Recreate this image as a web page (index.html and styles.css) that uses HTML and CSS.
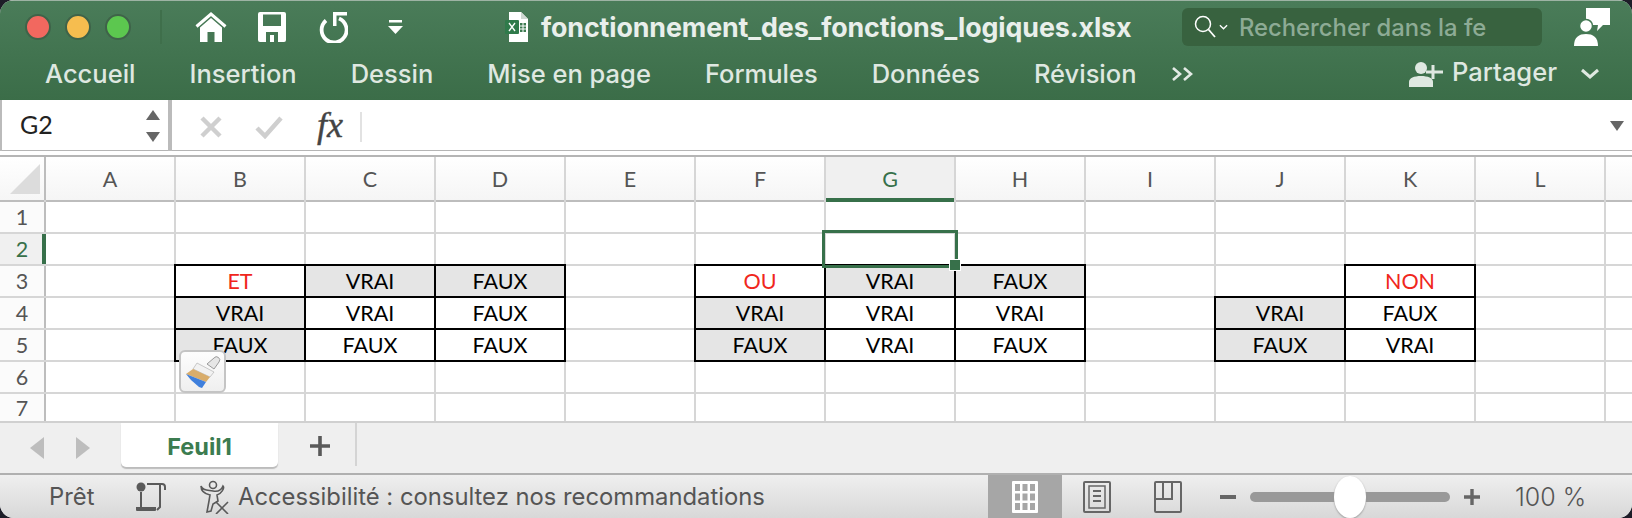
FILE: index.html
```html
<!DOCTYPE html>
<html lang="fr">
<head>
<meta charset="utf-8">
<title>fonctionnement_des_fonctions_logiques.xlsx</title>
<link rel="stylesheet" href="styles.css">
</head>
<body>
<div class="window">
  <header class="ribbon">
    <div class="titlebar">
      <div class="lights"><span class="light red"></span><span class="light yellow"></span><span class="light green"></span></div>
      <span class="qa-sep"></span>
      <svg class="ic-home" viewBox="0 0 32 30"><path d="M1.5 14.5 16 2l14.5 12.5" fill="none" stroke="#fff" stroke-width="3"/><path d="M5 15.5 16 6l11 9.500V30h-7.500V20h-7v10H5z" fill="#fff"/></svg>
      <svg class="ic-save" viewBox="0 0 28 30"><path d="M2 0h24a2 2 0 0 1 2 2v26a2 2 0 0 1-2 2H2a2 2 0 0 1-2-2V2a2 2 0 0 1 2-2zM5 2.500V14h18V2.500zM8 30h12V20H8zM12 23h4v7h-4z" fill="#fff" fill-rule="evenodd"/></svg>
      <svg class="ic-undo" viewBox="0 0 30 32"><path d="M8 9.500A12.500 12.500 0 1 0 21 7.500" fill="none" stroke="#fff" stroke-width="3.800"/><path d="M15 1h14v3.400H18.500V15H15z" fill="#fff"/></svg>
      <svg class="ic-drop" viewBox="0 0 15 14"><path d="M1 0h13v2.500H1zM0 6h15l-7.500 8z" fill="#fff"/></svg>
      <svg class="ic-file" viewBox="0 0 24 30"><path d="M4 0h12l7 7v23H4z" fill="#fff"/><path d="M16 0v7h7z" fill="#cfd8d2"/><rect x="0" y="8" width="14" height="14" rx="1" fill="#2f7a4a"/><path d="M4 11l6 8M10 11l-6 8" stroke="#fff" stroke-width="1.300"/><path d="M15 11h6v9h-6z" fill="#3d7a50"/><path d="M15 14h6M15 17h6M18 11v9" stroke="#fff"/></svg>
      <h1 class="doc-title">fonctionnement_des_fonctions_logiques.xlsx</h1>
      <div class="search">
        <svg class="ic-mag" viewBox="0 0 22 24"><circle cx="9" cy="9" r="7.500" fill="none" stroke="#fff" stroke-width="1.500"/><path d="M14.500 14.500 21 22" stroke="#fff" stroke-width="1.800"/></svg>
        <svg class="ic-mini" viewBox="0 0 10 6"><path d="M1 1l4 4 4-4" fill="none" stroke="#fff" stroke-width="1.500"/></svg>
        <span class="search-text">Rechercher dans la fe</span>
      </div>
      <svg class="ic-user" viewBox="0 0 36 38"><path d="M12 0h24v17h-7l-6 6 1-6h-12z" fill="#fff"/><circle cx="12" cy="18" r="6.500" fill="#fff" stroke="#457a55" stroke-width="1.500"/><path d="M0 38c0-9 5-12 12-12s12 3 12 12z" fill="#fff"/></svg>
    </div>
    <nav class="tabs">
      <span>Accueil</span><span>Insertion</span><span>Dessin</span><span>Mise en page</span><span>Formules</span><span>Données</span><span>Révision</span>
      <svg class="ic-more" viewBox="0 0 24 16"><path d="M2 2l7 6-7 6M13 2l7 6-7 6" fill="none" stroke="#e3ebe5" stroke-width="2.600"/></svg>
      <div class="share">
        <svg class="ic-share" viewBox="0 0 34 26"><circle cx="12" cy="7" r="6" fill="#dfe8e1"/><path d="M0 26v-5c0-4 5-6 12-6s12 2 12 6v5z" fill="#dfe8e1"/><path d="M24 4v14M17 11h17" stroke="#dfe8e1" stroke-width="3"/></svg>
        <span>Partager</span>
      </div>
      <svg class="ic-chev" viewBox="0 0 20 11"><path d="M2 2l8 7 8-7" fill="none" stroke="#dfe8e1" stroke-width="3"/></svg>
    </nav>
  </header>

  <div class="formula">
    <div class="namebox">
      <span>G2</span>
      <div class="stepper"><i class="tri up"></i><i class="tri down"></i></div>
    </div>
    <svg class="ic-x" viewBox="0 0 24 24"><path d="M3 3l18 18M21 3 3 21" stroke="#cfcfcf" stroke-width="4.500"/></svg>
    <svg class="ic-ok" viewBox="0 0 28 24"><path d="M2 13l8 8L26 3" fill="none" stroke="#cfcfcf" stroke-width="4.500"/></svg>
    <span class="fx">fx</span>
    <span class="fx-sep"></span>
    <i class="tri down fx-arrow"></i>
  </div>

  <main class="sheet">
    <div class="corner"><svg viewBox="0 0 30 30"><path d="M30 0v30H0z" fill="#dcdcdc"/></svg></div>
    <div class="ch">A</div><div class="ch">B</div><div class="ch">C</div><div class="ch">D</div><div class="ch">E</div><div class="ch">F</div><div class="ch on">G</div><div class="ch">H</div><div class="ch">I</div><div class="ch">J</div><div class="ch">K</div><div class="ch">L</div><div class="ch"></div>

    <div class="rh">1</div><div></div><div></div><div></div><div></div><div></div><div></div><div></div><div></div><div></div><div></div><div></div><div></div><div></div>

    <div class="rh on">2</div><div></div><div></div><div></div><div></div><div></div><div></div><div class="sel"><i class="handle"></i></div><div></div><div></div><div></div><div></div><div></div><div></div>

    <div class="rh">3</div><div></div><div class="t red-text">ET</div><div class="t g">VRAI</div><div class="t g">FAUX</div><div></div><div class="t red-text">OU</div><div class="t g">VRAI</div><div class="t g">FAUX</div><div></div><div></div><div class="t red-text">NON</div><div></div><div></div>

    <div class="rh">4</div><div></div><div class="t g">VRAI</div><div class="t">VRAI</div><div class="t">FAUX</div><div></div><div class="t g">VRAI</div><div class="t">VRAI</div><div class="t">VRAI</div><div></div><div class="t g">VRAI</div><div class="t">FAUX</div><div></div><div></div>

    <div class="rh">5</div><div></div><div class="t g">FAUX</div><div class="t">FAUX</div><div class="t">FAUX</div><div></div><div class="t g">FAUX</div><div class="t">VRAI</div><div class="t">FAUX</div><div></div><div class="t g">FAUX</div><div class="t">VRAI</div><div></div><div></div>

    <div class="rh">6</div><div></div><div></div><div></div><div></div><div></div><div></div><div></div><div></div><div></div><div></div><div></div><div></div><div></div>

    <div class="rh">7</div><div></div><div></div><div></div><div></div><div></div><div></div><div></div><div></div><div></div><div></div><div></div><div></div><div></div>

    <button class="paint" aria-label="Options de mise en forme">
      <svg viewBox="0 0 36 34"><path d="M22 9 29 3a3 3 0 0 1 5 4l-5 7z" fill="#e6e6e6" stroke="#9a9a9a"/><path d="M12 8 29 17l-4 5L8 14z" fill="#f2f2f2" stroke="#aaa" stroke-width=".6"/><path d="M8 14 25 22l-4 5L1 19z" fill="#d9ad6b"/><path d="M1 19 21 27l-4 6-3-1-8-7z" fill="#3f7fdc"/></svg>
    </button>
  </main>

  <div class="sheetbar">
    <svg class="nav-arrow" viewBox="0 0 14 22"><path d="M14 0v22L0 11z" fill="#bdbdbd"/></svg>
    <svg class="nav-arrow next" viewBox="0 0 14 22"><path d="M0 0v22l14-11z" fill="#bdbdbd"/></svg>
    <div class="sheet-tab">Feuil1</div>
    <svg class="ic-add" viewBox="0 0 20 20"><path d="M10 0v20M0 10h20" stroke="#595959" stroke-width="3.600"/></svg>
    <span class="tab-sep"></span>
  </div>

  <footer class="status">
    <span class="ready">Prêt</span>
    <svg class="ic-macro" viewBox="0 0 30 30"><circle cx="5" cy="5" r="4.500" fill="#5a5a5a"/><path d="M11 2h15a3 3 0 0 1 3 3v3M24 3v22l-3 3M5 10v15" fill="none" stroke="#5a5a5a" stroke-width="2"/><path d="M0 25h20v3a1 1 0 0 1-1 1H1a1 1 0 0 1-1-1z" fill="#5a5a5a"/></svg>
    <svg class="ic-a11y" viewBox="0 0 30 34"><circle cx="13" cy="5" r="3.500" fill="none" stroke="#5a5a5a" stroke-width="1.600"/><path d="M1 6c2 5 7 4 12 5s8 0 10-5c2 2-2 8-6 9l1 6-5 3-2 7-4 1 2-11 1-6C5 14 1 11 1 6z" fill="none" stroke="#5a5a5a" stroke-width="1.600"/><path d="M16 22l12 12M28 22 16 34" stroke="#5a5a5a" stroke-width="1.600"/></svg>
    <span class="a11y">Accessibilité : consultez nos recommandations</span>
    <div class="view-on">
      <svg class="ic-grid" viewBox="0 0 26 32"><rect width="26" height="32" rx="1" fill="#fff"/><path d="M3 3h5v7H3zM10.500 3h5v7h-5zM18 3h5v7h-5zM3 12.500h5v7H3zM10.500 12.500h5v7h-5zM18 12.500h5v7h-5zM3 22h5v7H3zM10.500 22h5v7h-5zM18 22h5v7h-5z" fill="#a6a6a6"/></svg>
    </div>
    <svg class="ic-page" viewBox="0 0 28 32"><rect x="1" y="1" width="26" height="30" rx="1" fill="none" stroke="#666" stroke-width="2"/><rect x="6" y="5" width="16" height="22" fill="none" stroke="#666" stroke-width="1.500"/><path d="M10 10h8M10 15h8M10 20h8" stroke="#666" stroke-width="2"/></svg>
    <svg class="ic-break" viewBox="0 0 28 32"><rect x="1" y="1" width="26" height="30" rx="1" fill="none" stroke="#666" stroke-width="2"/><path d="M1 18h17V1M9 1v17" fill="none" stroke="#666" stroke-width="2"/></svg>
    <span class="zoom-minus"></span>
    <div class="slider"><span class="thumb"></span></div>
    <svg class="ic-plus" viewBox="0 0 16 16"><path d="M8 0v16M0 8h16" stroke="#666" stroke-width="3.400"/></svg>
    <span class="pct">100 %</span>
  </footer>
</div>
</body>
</html>
```

FILE: styles.css
```css
* { box-sizing: border-box; }
html, body { margin: 0; height: 100%; }
body { background: #1d1d28; overflow: hidden; font-family: Inter, Roboto, "Liberation Sans", sans-serif; }

.window {
  width: 1632px; height: 518px;
  display: flex; flex-direction: column;
  border-radius: 14px; overflow: hidden;
  background: #efefef;
}

/* ribbon */
.ribbon {
  height: 100px; flex: none;
  background: linear-gradient(#4a7c59, #3b6d48);
  border-top: 1px solid #9db3a4;
  display: flex; flex-direction: column;
}
.titlebar { height: 52px; display: flex; align-items: center; padding-left: 25px; }
.lights { display: flex; gap: 14px; }
.light { width: 26px; height: 26px; border-radius: 50%; border: 2px solid #3f6349; }
.light.red { background: #f2685f; }
.light.yellow { background: #f6bd4f; }
.light.green { background: #5cc74f; }
.qa-sep { width: 2px; height: 34px; background: #3f6f4b; margin-left: 29px; }
.ic-home { width: 32px; height: 30px; margin-left: 33px; }
.ic-save { width: 28px; height: 30px; margin-left: 31px; }
.ic-undo { width: 30px; height: 32px; margin-left: 32px; }
.ic-drop { width: 15px; height: 14px; margin-left: 40px; }
.ic-file { width: 24px; height: 30px; margin-left: 102px; }
.doc-title {
  margin: 0 0 0 12px; width: 620px; white-space: nowrap;
  font-family: Inter, sans-serif; font-size: 26.800px; font-weight: 700; color: #e9efeb; letter-spacing: -0.1px;
}
.search {
  margin-left: 21px; width: 360px; height: 38px;
  background: #38623f; border-radius: 6px;
  display: flex; align-items: center; padding-left: 12px;
}
.ic-mag { width: 22px; height: 24px; flex: none; }
.ic-mini { width: 9px; height: 6px; flex: none; margin-left: 3px; }
.search-text {
  margin-left: 11px; white-space: nowrap;
  font-family: Inter, sans-serif; font-size: 23.800px; font-weight: 500; color: #8dab95;
}
.ic-user { width: 36px; height: 38px; margin-left: 32px; }

.tabs {
  height: 47px; display: flex; align-items: center; gap: 54px; padding: 0 32px 6px 45px;
  font-family: Inter, sans-serif; font-size: 25.500px; font-weight: 500; color: #dfe8e1;
}
.ic-more { width: 24px; height: 16px; margin-left: -20px; }
.share { margin-left: auto; display: flex; align-items: center; gap: 9px; }
.share span { position: relative; top: -2px; }
.ic-share { width: 34px; height: 26px; }
.ic-chev { width: 20px; height: 11px; margin-left: -31px; }

/* formula bar */
.formula {
  height: 57px; flex: none; background: #fff;
  display: flex; align-items: flex-start;
  border-bottom: 2px solid #b5b5b5;
  box-shadow: inset 0 -4px 0 #fff, inset 0 -5px 0 #b5b5b5;
}
.namebox {
  width: 172px; height: 51px; flex: none; padding: 0 8px 0 18px;
  border-left: 2px solid #bbb; border-right: 4px solid #bbb;
  display: flex; align-items: center; justify-content: space-between;
  font-family: Lato, sans-serif; font-size: 25px; color: #222;
}
.namebox > span { margin-bottom: 3px; }
.stepper { display: flex; flex-direction: column; gap: 12px; }
.tri { display: block; width: 0; height: 0; border-left: 7px solid transparent; border-right: 7px solid transparent; }
.tri.up { border-bottom: 10px solid #666; }
.tri.down { border-top: 10px solid #666; }
.ic-x { width: 24px; height: 24px; margin: 15px 0 0 27px; }
.ic-ok { width: 28px; height: 24px; margin: 15px 0 0 32px; }
.fx {
  margin: 4px 0 0 34px; width: 33px;
  font-family: "Liberation Serif", serif; font-style: italic; font-size: 36px; color: #444;
  -webkit-text-stroke: 0.4px #444;
}
.fx-sep { width: 2px; height: 30px; background: #e2e2e2; margin: 12px 0 0 10px; }
.fx-arrow { margin: 21px 8px 0 auto; }

/* sheet grid: the 2px gaps show through as the cell lines */
.sheet {
  position: relative; flex: none; height: 266px;
  display: grid;
  grid-template-columns: 44px repeat(12, 128px) 26px;
  grid-template-rows: 43px repeat(6, 30px) 27px;
  gap: 2px;
  background: #d6d6d6;
  border-bottom: 2px solid #d0d0d0;
  font-family: Lato, sans-serif; font-size: 21.500px; color: #000;
}
.sheet > div { background: #fff; display: flex; align-items: center; justify-content: center; }
.sheet > .corner { background: linear-gradient(#fff, #f6f6f6); justify-content: flex-start; box-shadow: 2px 0 0 #bdbdbd, 0 2px 0 #bdbdbd; }
.corner svg { width: 30px; height: 30px; margin-left: 10px; }
.sheet > .ch {
  background: linear-gradient(#fff, #f5f5f5); color: #555;
  box-shadow: 0 2px 0 #bdbdbd;
}
.sheet > .ch.on { background: #f0f0f0; color: #37704a; box-shadow: 0 2px 0 #37704a, inset 0 -2px 0 #37704a; }
.sheet > .rh { background: #fbfbfb; color: #555; box-shadow: 2px 0 0 #bdbdbd; }
.sheet > .rh.on { background: #f0f0f0; color: #37704a; box-shadow: 2px 0 0 #37704a, inset -2px 0 0 #37704a; }
.sheet > .t { outline: 2px solid #000; }
.sheet > .g { background: #e5e5e5; }
.sheet > .red-text { color: #f0261c; }
.sheet > .sel { position: relative; z-index: 1; outline: 3px solid #37704a; outline-offset: 1px; }
.handle {
  position: absolute; right: -6px; bottom: -6px; width: 10px; height: 10px;
  background: #37704a; outline: 1px solid #fff;
}
.paint {
  position: absolute; left: 179px; top: 193px; width: 47px; height: 43px; padding: 0;
  background: linear-gradient(#fdfdfd, #efefef); border: 2px solid #c4c4c4; border-radius: 6px;
  display: flex; align-items: center; justify-content: center;
}
.paint svg { width: 36px; height: 34px; }

/* sheet tabs */
.sheetbar {
  height: 52px; flex: none; background: #efefef;
  display: flex; align-items: flex-start;
  border-bottom: 2px solid #b0b0b0;
}
.nav-arrow { width: 14px; height: 22px; margin: 14px 0 0 30px; }
.nav-arrow.next { margin-left: 32px; }
.sheet-tab {
  width: 157px; height: 44px; margin: 0 0 0 31px; padding-top: 2px;
  background: #fff; border-radius: 0 0 5px 5px; box-shadow: 0 2px 1px #bcbcbc;
  display: flex; align-items: center; justify-content: center;
  font-size: 23.500px; font-weight: 700; color: #3c7c50; font-family: Inter, sans-serif;
}
.ic-add { width: 20px; height: 20px; margin: 13px 0 0 32px; }
.tab-sep { width: 2px; height: 43px; background: #d4d4d4; margin-left: 25px; }

/* status bar */
.status {
  flex: 1; background: linear-gradient(#efefef, #d8d8d8);
  display: flex; align-items: center;
  font-family: Inter, sans-serif; font-size: 23.800px; color: #555;
  padding-left: 49px;
}
.ready { width: 87px; }
.ic-macro { width: 30px; height: 30px; }
.ic-a11y { width: 30px; height: 34px; margin-left: 34px; }
.a11y { margin-left: 8px; width: 750px; white-space: nowrap; }
.view-on {
  width: 74px; align-self: stretch; background: #a6a6a6;
  display: flex; align-items: center; justify-content: center;
}
.ic-grid { width: 26px; height: 32px; }
.ic-page { width: 28px; height: 32px; margin-left: 21px; }
.ic-break { width: 28px; height: 32px; margin-left: 43px; }
.zoom-minus { width: 16px; height: 4px; background: #666; margin-left: 38px; }
.slider { width: 200px; height: 10px; margin-left: 14px; border-radius: 5px; background: #999; display: flex; justify-content: center; align-items: center; }
.thumb { width: 32px; height: 42px; flex: none; border-radius: 50%; background: #fff; box-shadow: 0 1px 2px #999; }
.ic-plus { width: 16px; height: 16px; margin-left: 14px; }
.pct { margin-left: 35px; font-size: 25px; font-weight: 300; white-space: nowrap; }
```
